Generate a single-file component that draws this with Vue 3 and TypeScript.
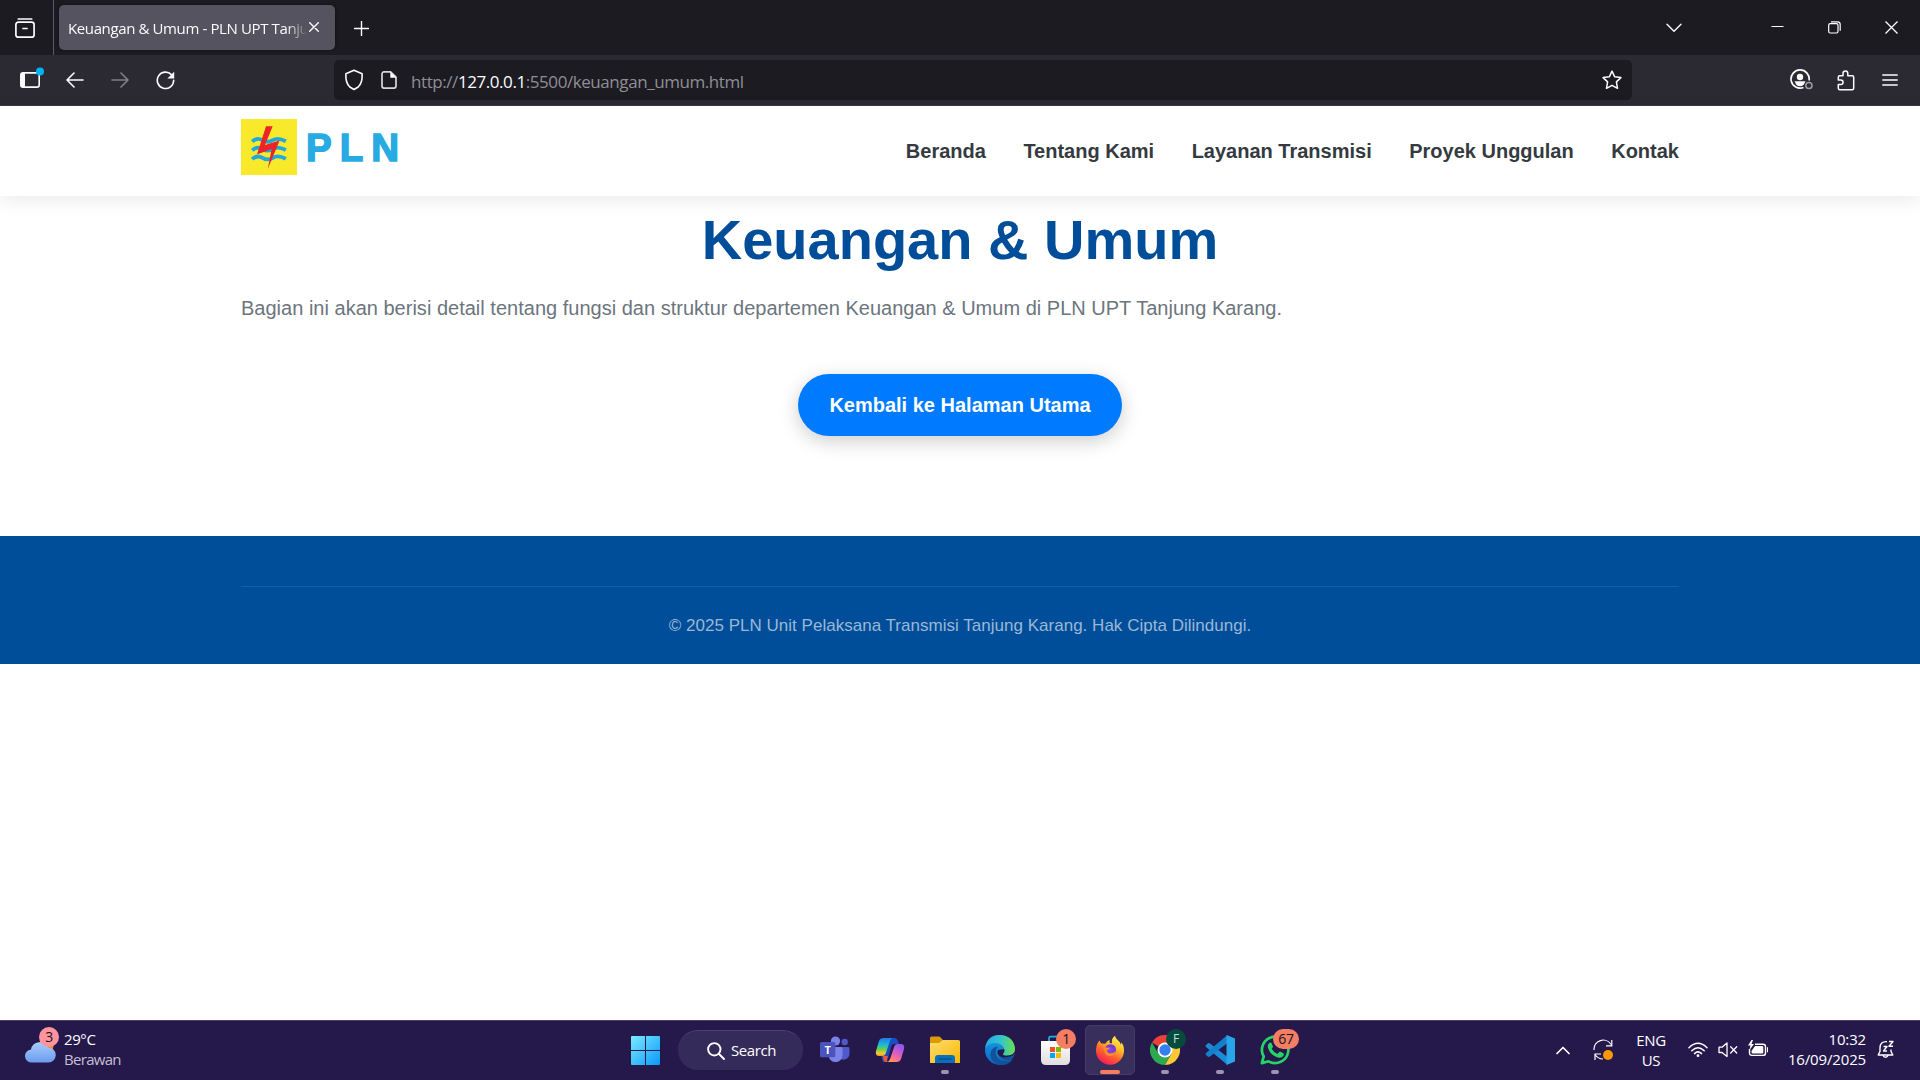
<script setup lang="ts">
interface NavItem { label: string; href: string }

const navItems: NavItem[] = [
  { label: 'Beranda', href: '#beranda' },
  { label: 'Tentang Kami', href: '#tentang' },
  { label: 'Layanan Transmisi', href: '#layanan' },
  { label: 'Proyek Unggulan', href: '#proyek' },
  { label: 'Kontak', href: '#kontak' },
]
</script>

<template>
  <div class="screen">
    <div class="tabbar">
      <div class="history-slot">
        <svg width="20" height="20" viewBox="0 0 20 20" fill="none" stroke="#fbfbfe" stroke-width="1.7" stroke-linecap="round">
          <path d="M3.3 1h13.4" /><rect x=".9" y="4.2" width="18.200" height="15" rx="2.5" /><path d="M8 10.5h4" />
        </svg>
      </div>
      <div class="tab">
        <span class="tab-title">Keuangan &amp; Umum - PLN UPT Tanjung Karang</span>
        <svg class="tab-close" width="10" height="10" viewBox="0 0 10 10" stroke="#fbfbfe" stroke-width="1.4" stroke-linecap="round"><path d="M.7.7l8.6 8.6M9.3.7L.7 9.3" /></svg>
      </div>
      <svg class="newtab" width="15" height="15" viewBox="0 0 15 15" stroke="#fbfbfe" stroke-width="1.4" stroke-linecap="round"><path d="M7.5.5v14M.5 7.5h14" /></svg>
      <div class="window-controls">
        <svg width="16" height="10" viewBox="0 0 16 10" fill="none" stroke="#fbfbfe" stroke-width="1.4" stroke-linecap="round"><path d="M1 1.2l7 7 7-7" /></svg>
        <svg width="13" height="13" viewBox="0 0 13 13" stroke="#fff" stroke-width="1"><path d="M.5 5.5h12" /></svg>
        <svg width="13" height="13" viewBox="0 0 13 13" fill="none" stroke="#fff" stroke-width="1.2"><rect x=".7" y="2.7" width="9.3" height="9.3" rx="1.5" /><path d="M3 .9h6.500q2.700 0 2.700 2.700v6.200" /></svg>
        <svg width="13" height="13" viewBox="0 0 13 13" stroke="#fff" stroke-width="1.3"><path d="M.5.5l12 12M12.500.5l-12 12" /></svg>
      </div>
    </div>

    <div class="toolbar">
      <div class="nav-buttons">
        <svg width="26" height="24" viewBox="0 0 26 24"><rect x="1.800" y="5.900" width="18.400" height="14.200" rx="2.200" fill="none" stroke="#fbfbfe" stroke-width="1.600" /><path d="M2 6h4v14H2z" fill="#fbfbfe" /><circle cx="21" cy="4.500" r="4" fill="#00b3f4" /></svg>
        <svg width="18" height="16" viewBox="0 0 18 16" fill="none" stroke="#fbfbfe" stroke-width="1.600" stroke-linecap="round" stroke-linejoin="round"><path d="M17 8H1M8 1L1 8l7 7" /></svg>
        <svg width="18" height="16" viewBox="0 0 18 16" fill="none" stroke="#807f86" stroke-width="1.600" stroke-linecap="round" stroke-linejoin="round"><path d="M1 8h16M10 1l7 7-7 7" /></svg>
        <svg width="19" height="19" viewBox="0 0 19 19"><path d="M15.400 3.600A8.200 8.200 0 1 0 17.700 9.300" fill="none" stroke="#fbfbfe" stroke-width="1.600" stroke-linecap="round" /><path d="M18.200.7v6.800h-6.800z" fill="#fbfbfe" /></svg>
      </div>
      <div class="urlbar">
        <svg width="20" height="22" viewBox="0 0 20 22" fill="none" stroke="#fbfbfe" stroke-width="1.600" stroke-linejoin="round"><path d="M10 1.200L18.100 4.700Q18.700 13.600 14.200 18L10 20.500 5.800 18Q1.300 13.600 1.900 4.700Z" /></svg>
        <svg width="16" height="18" viewBox="0 0 16 18"><path d="M9.600.9H3A2 2 0 0 0 1 2.900v12.200a2 2 0 0 0 2 2h10a2 2 0 0 0 2-2V6.200z" fill="none" stroke="#d8d8dc" stroke-width="1.700" stroke-linejoin="round" /><path d="M9.300.8v6h6z" fill="#fbfbfe" /></svg>
        <span class="url">http://<b>127.0.0.1</b>:5500/keuangan_umum.html</span>
        <svg class="star" width="20" height="20" viewBox="0 0 20 20" fill="none" stroke="#fbfbfe" stroke-width="1.500" stroke-linejoin="round"><path d="M10 1.200l2.700 5.600 6.200.8-4.500 4.300 1.100 6.400-5.500-3-5.500 3 1.100-6.400L1.100 7.600l6.200-.8z" /></svg>
      </div>
      <div class="tools">
        <svg width="24" height="22" viewBox="0 0 24 22"><path d="M19.100 11.500A9.100 9.100 0 1 0 13.500 18.500" fill="none" stroke="#fbfbfe" stroke-width="1.700" /><circle cx="10" cy="8" r="3.200" fill="#fbfbfe" /><path d="M4.500 12.300h11l-1.800 3.400q-3.700 3-7.400 0z" fill="#fbfbfe" /><circle cx="18.900" cy="16.500" r="3.100" fill="none" stroke="#9f9da5" stroke-width="1.500" /></svg>
        <svg width="18" height="21" viewBox="0 0 18 21" fill="none" stroke="#fbfbfe" stroke-width="1.500" stroke-linejoin="round"><path d="M2.800 5.800H6V3.500a2.400 2.400 0 0 1 4.800 0v2.300h4.400q1.500 0 1.500 1.500v10.900q0 1.500-1.500 1.500H2.800q-1.500 0-1.500-1.500v-3.600h2.500a2.200 2.200 0 0 0 0-4.500H1.300V7.300q0-1.500 1.500-1.500z" /></svg>
        <svg width="16" height="14" viewBox="0 0 16 14" stroke="#fbfbfe" stroke-width="1.400" stroke-linecap="round"><path d="M.8 2h14.400M.8 7h14.400M.8 12h14.400" /></svg>
      </div>
    </div>

    <div class="page">
      <header class="site-header">
        <div class="container header-row">
          <a class="logo" href="#beranda">
            <svg width="56" height="56" viewBox="0 0 56 56">
              <rect width="56" height="56" fill="#f9e92b" />
              <g fill="none" stroke="#20a8e0" stroke-width="3.800"><path d="M11.200 22.500q5-4.500 10.300-1.300t10.300 0 13 1" /><path d="M11.200 31.300q5-4.500 10.300-1.300t10.300 0 13 1" /><path d="M11.200 40.100q5-4.500 10.300-1.300t10.300 0 13 1" /></g>
              <path d="M25 7.300h6.700L24 26l14.600-4.600L26.800 50l3.800-20L16 35.500z" fill="#ed2427" />
            </svg>
            <span class="logo-text">PLN</span>
          </a>
          <nav class="site-nav"><a v-for="item in navItems" :key="item.label" :href="item.href">{{ item.label }}</a></nav>
        </div>
      </header>
      <main class="container content">
        <h1>Keuangan &amp; Umum</h1>
        <p>Bagian ini akan berisi detail tentang fungsi dan struktur departemen Keuangan &amp; Umum di PLN UPT Tanjung Karang.</p>
        <a class="button" href="#beranda">Kembali ke Halaman Utama</a>
      </main>
      <footer class="site-footer">
        <div class="container footer-inner">© 2025 PLN Unit Pelaksana Transmisi Tanjung Karang. Hak Cipta Dilindungi.</div>
      </footer>
    </div>

    <div class="taskbar">
      <div class="weather">
        <div class="weather-icon">
          <svg width="32" height="36" viewBox="0 0 32 36">
            <defs><linearGradient id="cloud" x2="0" y2="1"><stop stop-color="#a8cdfb" /><stop offset="1" stop-color="#6b9cf0" /></linearGradient></defs>
            <circle cx="21" cy="18" r="7.500" fill="#f98a19" /><path d="M7 34.500a6.500 6.500 0 0 1-1-13 9 9 0 0 1 17-2 7.500 7.500 0 0 1 .5 15z" fill="url(#cloud)" />
          </svg>
          <span class="badge weather-badge">3</span>
        </div>
        <div class="weather-text"><span>29°C</span><span class="dim">Berawan</span></div>
      </div>

      <div class="apps">
        <div class="app start">
          <svg width="29" height="29" viewBox="0 0 29 29"><defs><linearGradient id="win" x2="1" y2="1"><stop stop-color="#7deaff" /><stop offset="1" stop-color="#0799fa" /></linearGradient></defs><path d="M1 0h13v14H0V1q0-1 1-1zM15 0h13q1 0 1 1v13H15zM0 15h14v14H1q-1 0-1-1zM15 15h14v13q0 1-1 1H15z" fill="url(#win)" /></svg>
        </div>
        <div class="search">
          <svg width="18" height="18" viewBox="0 0 18 18" fill="none" stroke="#fff" stroke-width="1.900" stroke-linecap="round"><circle cx="7.300" cy="7.300" r="6.200" /><path d="M12 12l5 5" /></svg>
          <span>Search</span>
        </div>
        <div class="app teams">
          <svg width="30" height="28" viewBox="0 0 30 28">
            <circle cx="24.700" cy="6" r="3.200" fill="#5059c9" /><path d="M20 11h8q1.500 0 1.500 1.500v6a6 6 0 0 1-9.500 4z" fill="#5059c9" />
            <circle cx="15.500" cy="5" r="4.600" fill="#7b83eb" /><path d="M9 11h12q1.500 0 1.500 1.500v7a7 7 0 0 1-13.500 2z" fill="#7b83eb" />
            <rect y="6" width="15.300" height="15.300" rx="1.500" fill="#4b53bc" /><text x="7.800" y="17.600" text-anchor="middle" fill="#fff" font-family="Open Sans, sans-serif" font-weight="700" font-size="11" letter-spacing="0">T</text>
          </svg>
        </div>
        <div class="app">
          <svg width="30" height="28" viewBox="0 0 30 28">
            <defs>
              <linearGradient id="cpa" x1="0" y1="0" x2="0" y2="1"><stop stop-color="#2378e8" /><stop offset=".35" stop-color="#18b7d4" /><stop offset=".62" stop-color="#68cc5f" /><stop offset=".85" stop-color="#f2cf20" /><stop offset="1" stop-color="#f79232" /></linearGradient>
              <linearGradient id="cpb" x1=".7" y1="0" x2=".2" y2="1"><stop stop-color="#8c57ec" /><stop offset=".4" stop-color="#cc5cce" /><stop offset=".75" stop-color="#fb6f8d" /><stop offset="1" stop-color="#fea245" /></linearGradient>
            </defs>
            <path d="M14 2h6q2 0 2.700 2.500L24 8h-5q-2 0-2.600 2L13 23q-1 4-5 3L6 19z" fill="#184dc4" />
            <path d="M8.500 2H18q-2 0-3 3l-4.500 13q-.8 2-3 2H4Q0 20 1 15L4 5q1-3 4.500-3z" fill="url(#cpa)" />
            <path d="M21.500 26H12q2 0 3-3l4.500-13q.8-2 3-2H26q4 0 3 5l-3 10q-1 3-4.500 3z" fill="url(#cpb)" />
            <path d="M8 20h5l-1 3q-.7 2.500 1.500 3H11q-2 0-2.500-2z" fill="#f2562f" />
          </svg>
        </div>
        <div class="app">
          <svg width="30" height="28" viewBox="0 0 30 28"><defs><linearGradient id="fold" x2="1" y2="1"><stop stop-color="#ffdc71" /><stop offset="1" stop-color="#fab900" /></linearGradient></defs><path d="M1.500.5h8L13 4v7H0V2Q0 .5 1.500.5z" fill="#dc9a03" /><path d="M0 7h9l4-3h15.500Q30 4 30 5.500V27H0z" fill="url(#fold)" /><path d="M5 27v-5q0-3 3-3h14q3 0 3 3v5z" fill="#086fbd" /><path d="M8.500 23h13" stroke="#054e83" stroke-width="1.200" /></svg>
          <i class="dot"></i>
        </div>
        <div class="app">
          <svg width="30" height="30" viewBox="0 0 30 30">
            <defs><linearGradient id="ed1" x2="1"><stop stop-color="#28a5e8" /><stop offset=".5" stop-color="#31c3d0" /><stop offset="1" stop-color="#6bdf4b" /></linearGradient><linearGradient id="ed2" x2="0" y2="1"><stop stop-color="#1aa0e4" /><stop offset="1" stop-color="#0a67c5" /></linearGradient></defs>
            <circle cx="15" cy="15" r="15" fill="url(#ed2)" />
            <path d="M13 11.500Q9 16 12 22q4 6 15.500 2.500Q23 31 14 30 5 27 5.500 19 6 12 13 11.500z" fill="#12529b" />
            <path d="M13 15q-2 4 3 7 5 2.500 11 0l3.500-5L20 14z" fill="#25194c" />
            <path d="M12.500 17.500q1 4.500 6 5 5 0 8.800-1.700 1.200-.4.900.8Q27 24 24.500 25 14 26 12.500 17.500z" fill="#12529b" />
            <path d="M.2 13Q2 0 15 0q14 1 15 14-.2 6.500-8 6.500-4 0-4-1.500 1.800-2 1.500-4-1-6-8.500-7Q4 8 .2 13z" fill="url(#ed1)" />
          </svg>
        </div>
        <div class="app">
          <svg width="29" height="30" viewBox="0 0 29 30"><defs><linearGradient id="store" x2="0" y2="1"><stop stop-color="#fff" /><stop offset="1" stop-color="#dedede" /></linearGradient></defs><path d="M8 7V3.200q0-1.500 1.500-1.500h10q1.500 0 1.500 1.500V7" fill="none" stroke="#27aee9" stroke-width="1.700" /><path d="M0 6h29v19q0 5-5 5H5q-5 0-5-5z" fill="url(#store)" /><path d="M9 12h5v5H9z" fill="#f25022" /><path d="M15 12h5v5h-5z" fill="#7fba00" /><path d="M9 18h5v5H9z" fill="#00a4ef" /><path d="M15 18h5v5h-5z" fill="#ffb900" /></svg>
          <span class="badge app-badge">1</span>
        </div>
        <div class="app active">
          <svg width="30" height="30" viewBox="0 0 30 30">
            <defs><linearGradient id="fx" x1=".8" y1="0" x2=".25" y2="1"><stop stop-color="#fff44f" /><stop offset=".35" stop-color="#ffbd2c" /><stop offset=".62" stop-color="#ff652d" /><stop offset="1" stop-color="#f7115e" /></linearGradient><radialGradient id="fxp"><stop stop-color="#8a4af3" /><stop offset="1" stop-color="#6c31d8" /></radialGradient></defs>
            <path d="M4.500 5.500q.5 2 2 3l3.700.2q2-3.200 4.500-4-.7 2.100.3 3.500h2Q16 3.500 20 .7q.2 2.900 3.400 5 2 1.600 2.400 4l.6-2.200Q29 10 29 15.500A14 14 0 0 1 1 16Q1 9 4.500 5.500z" fill="url(#fx)" />
            <circle cx="15.500" cy="14.700" r="5.500" fill="url(#fxp)" /><path d="M9 12q3 1 6 .8-1 2.200-3.300 2.600 1 2.800 4.300 2.800 3 0 4.500-2.500 0 5.300-5.500 5.300-6 0-6-9z" fill="#ff8c2a" />
          </svg>
          <i class="dot wide"></i>
        </div>
        <div class="app">
          <svg width="30" height="30" viewBox="0 0 30 30"><path d="M15 15L2 7.500A15 15 0 0 1 28 7.500H15z" fill="#ea4335" /><path d="M2 7.500A15 15 0 0 0 15 30l6.500-11.250H8.500z" fill="#2da94f" /><path d="M28 7.500A15 15 0 0 1 15 30l6.500-11.250L22 9z" fill="#fcc934" /><path d="M15 7.500h13a15 15 0 0 1 1.800 5H20z" fill="#fcc934" /><circle cx="15" cy="15" r="7.500" fill="#fff" /><circle cx="15" cy="15" r="5.700" fill="#3480f0" /></svg>
          <span class="badge app-badge profile">F</span><i class="dot"></i>
        </div>
        <div class="app">
          <svg width="30" height="30" viewBox="0 0 30 30"><path d="M1 10l2-1.800q1-.5 2 .2L22.500 22v8L1 12q-1-1 0-2z" fill="#1b8bd5" /><path d="M1 20l2 1.800q1 .5 2-.2L22.500 8V0L1 18q-1 1 0 2z" fill="#147fca" /><path d="M21.500 0L30 3.500v23L21.500 30z" fill="#28a4eb" /></svg>
          <i class="dot"></i>
        </div>
        <div class="app">
          <svg width="30" height="30" viewBox="0 0 30 30"><path d="M1.900 28.100l1.800-6.700A13.200 13.200 0 1 1 8.600 26.300z" fill="none" stroke="#25d366" stroke-width="2.700" stroke-linejoin="round" /><path d="M9 8.300q1.700-1.700 2.700.2l1.200 2.800q.2 1-1.200 2.400 2 3.800 5.800 5.200l1.600-1.900q.7-.6 1.500-.2l2.700 1.400q1 .7.300 2.200-1.600 2.800-5 2.300Q10.500 20.700 8 13q-.7-3 1-4.700z" fill="#25d366" /></svg>
          <span class="badge app-badge pill">67</span><i class="dot"></i>
        </div>
      </div>

      <div class="tray">
        <svg class="chev" width="14" height="9" viewBox="0 0 14 9" fill="none" stroke="#fff" stroke-width="1.700" stroke-linecap="round" stroke-linejoin="round"><path d="M1 7.500l6-6 6 6" /></svg>
        <svg class="sync" width="21" height="22" viewBox="0 0 21 22" fill="none" stroke="#fff" stroke-width="1.200"><path d="M1 11A9.200 9.200 0 0 1 18 5.500M18.800 1v5.800H13M10 20Q5 19.800 2.300 16M2 21v-6h6" /><circle cx="15" cy="16" r="5" fill="#ff9800" stroke="none" /></svg>
        <div class="lang"><span>ENG</span><span>US</span></div>
        <svg class="wifi" width="20" height="16" viewBox="0 0 20 16" fill="none" stroke="#fff" stroke-width="1.500" stroke-linecap="round"><path d="M1 5.700q9-8.800 18 0M3.800 8.700q6.200-6 12.400 0M6.500 11.600q3.500-3.400 7 0" /><circle cx="10" cy="13.700" r="1.400" fill="#fff" stroke="none" /></svg>
        <svg class="sound" width="20" height="16" viewBox="0 0 20 16" fill="none" stroke="#fff" stroke-width="1.300" stroke-linejoin="round" stroke-linecap="round"><path d="M1 5.200h3L9 1v13.600l-5-4.100H1zM12.700 4.800l6 6.200M18.700 4.800l-6 6.200" /></svg>
        <svg class="battery" width="21" height="17" viewBox="0 0 21 17"><path d="M7 4.200h8q2.500 0 2.500 2.500v6.200q0 2.500-2.500 2.500H4q-2.500 0-2.500-2.500V9" fill="none" stroke="#fff" stroke-width="1.400" /><path d="M7 6h7q1.300 0 1.300 1.300v5q0 1.300-1.300 1.300H5q-1.500 0-1.500-1.500V11zM19 7q1 0 1 1v3.500q0 1-1 1z" fill="#fff" /><path d="M3.500 0L0 5.500h2.500L1.500 10 6 4H3.500L5 0z" fill="#fff" /></svg>
        <div class="clock"><span>10:32</span><span>16/09/2025</span></div>
        <svg class="bell" width="18" height="19" viewBox="0 0 18 19" fill="none" stroke="#fff" stroke-width="1.400" stroke-linejoin="round"><path d="M10 1.700Q3 1.200 3 8v3.500L1.200 15h14.600L14 11.500v-2M6 15.500a2.700 2.700 0 0 0 5 0M6.500 6.500H10L6.500 11H10M12 1.500h4L12 6.200h4" /></svg>
      </div>
    </div>
  </div>
</template>

<style>
html, body { margin: 0; background: #fff; }
</style>

<style scoped>
* { box-sizing: border-box; }
svg { display: block; flex: none; }
a { text-decoration: none; color: inherit; }
.screen { width: 1920px; height: 1080px; overflow: hidden; display: flex; flex-direction: column; font-family: "Open Sans", "Noto Sans", sans-serif; }

.tabbar { height: 55px; flex: none; background: #1c1b22; display: flex; align-items: center; color: #fbfbfe; }
.history-slot { width: 54px; height: 55px; border-right: 1px solid #5b5a62; padding: 18px 0 0 15px; }
.tab { width: 276px; height: 45px; margin-left: 5px; border-radius: 5px; background: #55535f; display: flex; align-items: center; padding-left: 9px; box-shadow: 0 0 3px #0008; }
.tab-title { width: 238px; overflow: hidden; white-space: nowrap; font-size: 15px; letter-spacing: -.38px; line-height: 22px; mask-image: linear-gradient(90deg, #000 218px, transparent 240px); }
.tab-close { margin: -1px 0 0 3px; }
.newtab { margin: 2px 0 0 19px; }
.window-controls { margin-left: auto; display: flex; align-items: center; padding-right: 22px; }
.window-controls svg:nth-child(2) { margin-left: 89px; }
.window-controls svg:nth-child(n+3) { margin-left: 44px; }

.toolbar { height: 51px; flex: none; background: #2b2a33; border-bottom: 1px solid #3a3942; display: flex; align-items: center; }
.nav-buttons { width: 334px; display: flex; align-items: center; padding-left: 19px; }
.nav-buttons svg:nth-child(1) { margin-top: -2px; }
.nav-buttons svg:nth-child(2) { margin-left: 21px; }
.nav-buttons svg:nth-child(3) { margin-left: 27px; }
.nav-buttons svg:nth-child(4) { margin-left: 27px; }
.urlbar { width: 1298px; height: 40px; border-radius: 5px; background: #1c1b22; display: flex; align-items: center; padding: 0 10px; }
.urlbar svg:nth-child(2) { margin-left: 17px; }
.url { margin: 3px 0 0 14px; font-size: 17px; letter-spacing: -.43px; color: #8f8e95; white-space: nowrap; }
.url b { font-weight: 400; color: #fbfbfe; }
.star { margin-left: auto; }
.tools { margin-left: auto; padding-right: 22px; display: flex; align-items: center; }
.tools svg:nth-child(2) { margin-left: 23px; }
.tools svg:nth-child(3) { margin-left: 27px; }

.page { height: 914px; flex: none; background: #fff; font-family: "Liberation Sans", Arial, sans-serif; }
.container { width: 1438px; margin: 0 auto; }
.site-header { height: 90px; position: relative; background: #fff; box-shadow: 0 5px 19px rgba(0, 0, 0, .08); }
.header-row { display: flex; justify-content: space-between; align-items: flex-start; }
.logo { display: flex; margin-top: 13px; }
.logo-text { font-family: "Liberation Sans", sans-serif; font-weight: 700; font-size: 38.500px; line-height: 58px; letter-spacing: 8px; margin-left: 9px; color: #27abe2; -webkit-text-stroke: 1.500px #27abe2; }
.site-nav { display: flex; gap: 37.500px; padding-top: 33px; font-size: 20px; line-height: 24px; font-weight: 700; color: #343a40; }
.content { height: 340px; display: flex; flex-direction: column; }
.content h1 { margin: 12px 0 0; font-size: 56px; line-height: 64px; text-align: center; color: #004d99; }
.content p { margin: 24px 0 0; font-size: 20px; line-height: 24px; letter-spacing: .01px; color: #6c757d; }
.button { align-self: center; width: 324px; height: 62px; margin-top: 54px; border-radius: 31px; background: #007bff; color: #fff; font-weight: 700; font-size: 20px; line-height: 62px; text-align: center; box-shadow: 0 5px 19px rgba(0, 0, 0, .2); }
.site-footer { height: 128px; padding-top: 50px; background: #004d99; }
.footer-inner { border-top: 1px solid #195ea3; padding-top: 27px; text-align: center; font-size: 17px; line-height: 24px; letter-spacing: .02px; color: #99b8d6; }

.taskbar { height: 60px; flex: none; background: #25194c; border-top: 1px solid #4a4168; display: flex; color: #fff; font-size: 15px; letter-spacing: -.4px; }
.weather { width: 630px; display: flex; padding: 7px 0 0 25px; line-height: 20px; }
.weather-icon { position: relative; width: 39px; height: 36px; }
.weather-text { display: flex; flex-direction: column; padding-top: 1px; }
.dim { color: #c4bfd2; letter-spacing: -.7px; }
.badge { position: absolute; height: 20px; min-width: 20px; border-radius: 10px; background: #f47d62; color: #19151f; font-size: 14px; line-height: 20px; text-align: center; letter-spacing: -.3px; }
.weather-badge { left: 14px; top: -1px; background: #ff949e; }
.apps { display: flex; align-items: flex-start; padding-top: 4px; }
.app { position: relative; width: 50px; height: 50px; margin-right: 5px; border-radius: 5px; display: flex; align-items: center; justify-content: center; }
.start { width: 31px; margin-right: 17px; }
.search { width: 125px; height: 40px; margin: 5px 7px 0 0; border-radius: 20px; background: #352b5a; border-top: 1px solid #4b4170; display: flex; align-items: center; padding-left: 29px; }
.search span { margin: -2px 0 0 6px; }
.active { background: #392f5c; border: 1px solid #463c68; }
.dot { position: absolute; bottom: 1px; left: 21px; width: 8px; height: 4px; border-radius: 2px; background: #9c95af; }
.wide { left: 14px; bottom: 0; width: 20px; background: #f47d62; }
.app-badge { left: 26px; top: 4px; }
.profile { background: #064c3e; color: #c4ddd7; font-size: 12px; }
.pill { left: 23px; width: 26px; }
.tray { margin-left: auto; display: flex; align-items: flex-start; line-height: 20px; padding-right: 25px; }
.chev { margin-top: 25px; }
.sync { margin: 18px 0 0 23px; }
.lang { width: 40px; margin: 9px 0 0 17px; display: flex; flex-direction: column; align-items: center; }
.wifi { margin: 21px 0 0 17px; }
.sound { margin: 21px 0 0 10px; }
.battery { margin: 19px 0 0 10px; }
.clock { width: 97px; display: flex; flex-direction: column; align-items: flex-end; margin: 8px 11px 0 0; letter-spacing: -.15px; }
.bell { margin-top: 19px; }
</style>
